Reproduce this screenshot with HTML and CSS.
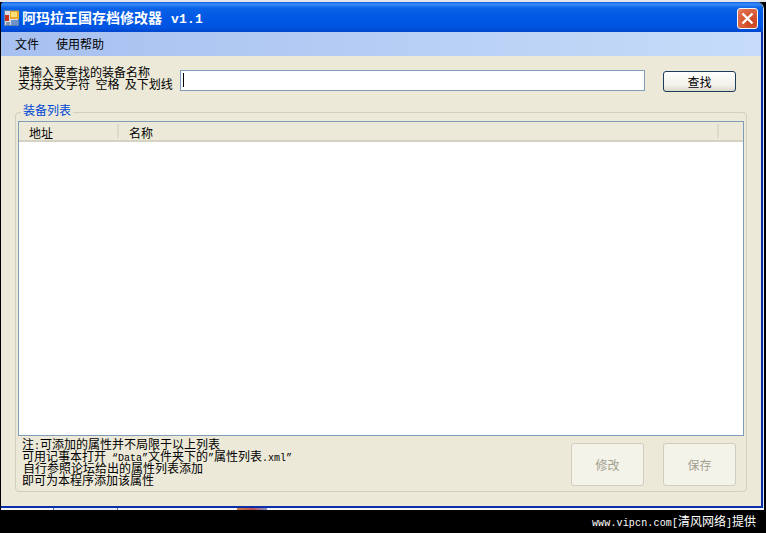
FILE: index.html
```html
<!DOCTYPE html>
<html>
<head>
    <title>阿玛拉王国存档修改器 v1.1</title>
    <link rel="stylesheet" href="styles.css">
</head>
<body>
    <div class="top-strip"></div>
    <div class="window">
        <div class="title-bar">
            <svg class="app-icon" width="16" height="16" viewBox="0 0 16 16">
                <rect x="0" y="0" width="15" height="16" fill="#5f7fa8"/>
                <rect x="1" y="1" width="13" height="14" fill="#d5dcea"/>
                <rect x="6" y="1" width="9" height="8" fill="#e8a92a"/>
                <rect x="7" y="2" width="6" height="5" fill="#fbe07a"/>
                <rect x="1" y="5" width="4" height="6" fill="#c8301e"/>
                <rect x="7" y="10" width="7" height="5" fill="#6f92c8"/>
                <rect x="2" y="12" width="4" height="3" fill="#8a94a8"/>
            </svg>
            <span class="title-text">阿玛拉王国存档修改器<span class="version">v1.1</span></span>
            <div class="close-btn">
                <svg width="13" height="13" viewBox="0 0 13 13">
                    <path d="M1.5 1.5 L11.5 11.5 M11.5 1.5 L1.5 11.5" stroke="#fff" stroke-width="2.4" fill="none"/>
                </svg>
            </div>
        </div>

        <div class="menu-bar">
            <span class="menu-item">文件</span>
            <span class="menu-item">使用帮助</span>
        </div>

        <div class="content">
            <div class="search-row">
                <div class="search-label">请输入要查找的装备名称<br>支持英文字符  空格  及下划线</div>
                <div class="search-input"><span class="caret"></span></div>
                <div class="btn find-btn">查找</div>
            </div>

            <div class="group-box">
                <div class="group-title">装备列表</div>
                <div class="list-view">
                    <div class="list-header">
                        <div class="col col-addr">地址</div>
                        <div class="col col-name">名称</div>
                        <div class="col col-rest"></div>
                    </div>
                </div>
                <div class="bottom-row">
                    <div class="notes">
                        <div>注<span class="mono">:</span>可添加的属性并不局限于以上列表</div>
                        <div>可用记事本打开<span class="mono"> “Data”</span>文件夹下的<span class="mono">”</span>属性列表<span class="mono">.xml”</span></div>
                        <div class="indent">自行参照论坛给出的属性列表添加</div>
                        <div>即可为本程序添加该属性</div>
                    </div>
                    <div class="btn big-btn disabled">修改</div>
                    <div class="btn big-btn disabled">保存</div>
                </div>
            </div>
        </div>
    </div>
    <div class="desktop-strip">
        <div class="strip-gap"></div>
        <div class="strip-img"></div>
        <div class="strip-gap-2"></div>
        <div class="strip-red"></div>
    </div>
    <div class="footer">www.vipcn.com<span class="footer-cn"><span class="bracket">[</span>清风网络<span class="bracket">]</span>提供</span></div>
</body>
</html>
```

FILE: styles.css
```css
html, body { margin: 0; padding: 0; }
body {
    width: 766px;
    height: 533px;
    overflow: hidden;
    background: #000;
    font-family: "Noto Sans CJK SC", "Liberation Sans", sans-serif;
    font-size: 12px;
    color: #000;
}
.top-strip { height: 2px; background: #e4e6ea; }
.window {
    width: 760px;
    margin-left: 1px;
    border-right: 2px solid #0a2fa8;
    border-bottom: 2px solid #0a2fa8;
    box-shadow: 1px 0 0 #d8e2f2;
    border-top-right-radius: 7px;
}
.title-bar {
    width: 762px;
    height: 30px;
    display: flex;
    align-items: center;
    background: linear-gradient(to bottom, #0a5ce2 0, #3a8df6 2px, #0a62e8 6px, #0058e4 16px, #0055e2 25px, #0046cc 30px);
    border-top-right-radius: 7px;
    border-top-left-radius: 3px;
}
.app-icon { margin-left: 3px; margin-top: 2px; }
.title-text {
    margin-left: 2px;
    color: #fff;
    font-size: 14px;
    font-weight: bold;
    white-space: pre;
}
.version {
    font-family: "Liberation Mono", monospace;
    font-size: 13px;
    margin-left: 9px;
    letter-spacing: 0.2px;
}
.close-btn {
    width: 19px;
    height: 19px;
    margin-left: auto;
    margin-right: 5px;
    margin-top: 2px;
    border: 1px solid #f2f2f2;
    border-radius: 3px;
    background: radial-gradient(circle at 70% 70%, #c8401c, #e06a48 75%, #e89070);
    display: flex;
    align-items: center;
    justify-content: center;
}
.menu-bar {
    height: 24px;
    display: flex;
    align-items: center;
    padding-left: 14px;
    gap: 17px;
    background: linear-gradient(to right, #a6c0f0, #c6dcf9);
}
.menu-item { color: #000; line-height: 14px; }
.content {
    height: 450px;
    background: #ece9d8;
    padding-top: 10px;
    box-sizing: border-box;
}
.search-row {
    display: flex;
    height: 46px;
    padding-left: 17px;
}
.search-label {
    width: 162px;
    line-height: 12px;
    white-space: pre;
}
.search-input {
    width: 461px;
    height: 17px;
    margin-top: 4px;
    border: 1px solid #7f9db9;
    background: #fff;
    padding: 2px 0 0 2px;
}
.caret { display: block; width: 1px; height: 14px; background: #000; }
.btn {
    box-sizing: border-box;
    display: flex;
    align-items: center;
    justify-content: center;
    border-radius: 3px;
}
.find-btn {
    width: 73px;
    height: 21px;
    margin-top: 5px;
    margin-left: 18px;
    border: 1px solid #1f3c5c;
    background: linear-gradient(to bottom, #ffffff, #f2f1ea 70%, #dcd8ca);
    font-size: 12px;
}
.group-box {
    position: relative;
    box-sizing: border-box;
    width: 732px;
    height: 380px;
    margin-left: 14px;
    border: 1px solid #d0d0bf;
    border-radius: 4px;
    padding: 8px 2px 0 2px;
}
.group-title {
    position: absolute;
    left: 5px;
    top: -10px;
    padding: 0 2px;
    background: #ece9d8;
    color: #0046d5;
    line-height: 14px;
}
.list-view {
    box-sizing: border-box;
    height: 315px;
    border: 1px solid #7f9db9;
    background: #fff;
}
.list-header {
    display: flex;
    height: 20px;
    background: #ece9d8;
    border-bottom: 2px solid #d6d2c2;
    box-sizing: border-box;
}
.col {
    box-sizing: border-box;
    border-right: 2px solid #dcd9c8;
    height: 14px;
    margin-top: 2px;
    line-height: 18px;
}
.col-addr { width: 100px; padding-left: 10px; }
.col-name { width: 600px; padding-left: 10px; }
.col-rest { flex: 1; border-right: none; }
.bottom-row {
    display: flex;
    align-items: flex-start;
}
.notes {
    width: 549px;
    padding-left: 4px;
    padding-top: 2px;
    line-height: 12px;
    white-space: nowrap;
}
.indent { padding-left: 1px; }
.mono {
    font-family: "Liberation Mono", monospace;
    font-size: 10px;
    line-height: 0;
    white-space: pre;
}
.big-btn {
    width: 73px;
    height: 43px;
    margin-top: 7px;
}
.big-btn + .big-btn { margin-left: 19px; }
.disabled {
    border: 1px solid #cfcdbd;
    background: #f4f3ea;
    color: #a3a08f;
}
.desktop-strip {
    display: flex;
    height: 2px;
    margin-left: 1px;
    width: 763px;
    background: #f2f4f8;
}
.strip-gap { width: 52px; }
.strip-img {
    box-sizing: border-box;
    width: 65px;
    background: #e6ecf6;
    border-left: 1px solid #5070a8;
    border-right: 1px solid #5070a8;
}
.strip-gap-2 { width: 119px; }
.strip-red { width: 30px; background: linear-gradient(to right, #c88040, #c05050, #8898c8); }
.footer {
    height: 21px;
    padding-right: 10px;
    color: #fff;
    text-align: right;
    font-family: "Liberation Mono", monospace;
    font-size: 10px;
    letter-spacing: 0.15px;
    line-height: 21px;
}
.footer-cn {
    font-family: "Noto Sans CJK SC", sans-serif;
    font-size: 12px;
    letter-spacing: 0;
}
.bracket { font-family: "Liberation Mono", monospace; font-size: 10px; }
```
